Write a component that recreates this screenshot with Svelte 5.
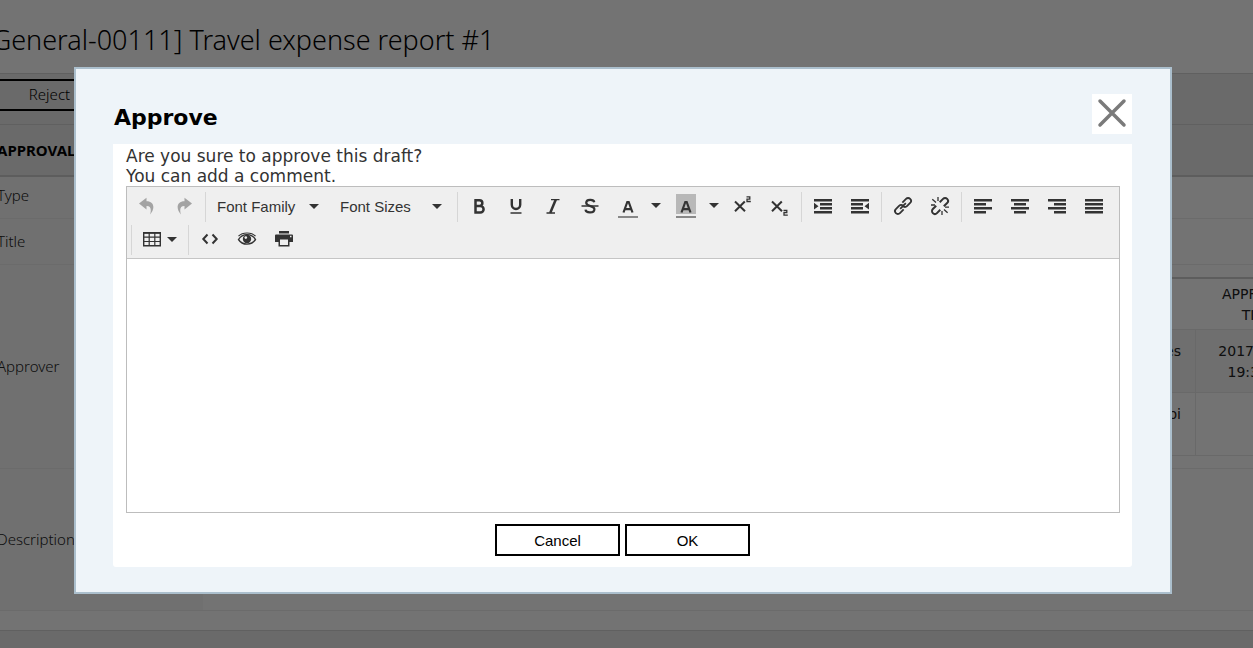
<script>
  let comment = $state('');
  const full = [3, 7, 11, 15];
  const aligns = [
    { name: 'Align left', x: 1, w: 12 },
    { name: 'Align center', x: 4, w: 12 },
    { name: 'Align right', x: 7, w: 12 },
    { name: 'Justify', x: 1, w: 18 }
  ];
</script>

{#snippet caret()}
  <svg class="caret" viewBox="0 0 10 5" aria-hidden="true"><path d="M0 0h10L5 5z" /></svg>
{/snippet}

<div class="page">
  <h1>[General-00111] Travel expense report #1</h1>
  <div class="actions"><button class="btn reject">Reject</button></div>
  <h2>APPROVAL</h2>
  <table class="details">
    <tbody>
      <tr class="r1"><th>Type</th><td></td></tr>
      <tr class="r2"><th>Title</th><td></td></tr>
      <tr class="r3">
        <th>Approver</th>
        <td>
          <table class="steps">
            <thead><tr><th></th><th class="time">APPROVAL<br />TIME</th></tr></thead>
            <tbody>
              <tr class="done"><td class="who">es</td><td class="time">2017-04-05<br />19:30:00</td></tr>
              <tr><td class="who">bi</td><td class="time"></td></tr>
            </tbody>
          </table>
        </td>
      </tr>
      <tr class="r4"><th>Description</th><td></td></tr>
    </tbody>
  </table>
  <footer></footer>
</div>

<div class="overlay">
  <div class="dialog" role="dialog" aria-modal="true" aria-labelledby="dialog-title">
    <header>
      <h3 id="dialog-title">Approve</h3>
      <button class="close" aria-label="Close">
        <svg viewBox="0 0 40 40"><path d="M8 7 32 31M32 7 8 31" /></svg>
      </button>
    </header>
    <div class="body">
      <p>Are you sure to approve this draft?<br />You can add a comment.</p>
      <div class="editor">
        <div class="toolbar" role="toolbar" aria-label="Formatting">
          <div class="row">
            <div class="group">
              <button class="tool off" aria-label="Undo">
                <svg viewBox="0 0 20 20"><path d="M9.5 1.8 2 7.6l7.500 5.800V10c3.800-.2 5.300 2.600 3.600 8.400C18.400 12.500 17.300 5.200 9.500 5.200z" /></svg>
              </button>
              <button class="tool off" aria-label="Redo">
                <svg viewBox="0 0 20 20"><path d="M10.500 1.800 18 7.600l-7.500 5.800V10c-3.800-.2-5.300 2.600-3.600 8.400C1.600 12.500 2.700 5.200 10.500 5.200z" /></svg>
              </button>
            </div>
            <div class="group">
              <div class="list"><select aria-label="Font Family"><option>Font Family</option></select>{@render caret()}</div>
              <div class="list"><select aria-label="Font Sizes"><option>Font Sizes</option></select>{@render caret()}</div>
            </div>
            <div class="group">
              <button class="tool" aria-label="Bold">
                <svg class="line" viewBox="0 0 20 20"><path d="M6.500 4.200V16.500M5.300 4.200H10.500a2.800 2.800 0 0 1 0 5.700H6.500M10.500 9.900h.8a3.300 3.300 0 0 1 0 6.600H5.300" stroke-width="2.500" /></svg>
              </button>
              <button class="tool" aria-label="Underline">
                <svg class="line" viewBox="0 0 20 20"><path d="M5.800 3V8.800a4.200 4.200 0 0 0 8.400 0V3" stroke-width="2.400" /><path d="M4.500 17H15.500" stroke-width="1.500" /></svg>
              </button>
              <button class="tool" aria-label="Italic">
                <svg class="line" viewBox="0 0 20 20"><path d="M8 3.600h8.500M3.500 17h8.500" stroke-width="1.300" /><path d="M12.800 3.600 7.200 17" stroke-width="2.500" /></svg>
              </button>
              <button class="tool" aria-label="Strikethrough">
                <svg class="line" viewBox="0 0 20 20"><path d="M14.300 6.200C13.700 2.900 6.200 2.900 6.200 6.800c0 4.200 8.200 2.500 8.200 6.400 0 4.200-8.400 4.300-8.900.5" stroke-width="2.200" /><path d="M1.500 10H18.500" stroke-width="1.500" /></svg>
              </button>
              <div class="split">
                <button class="color" aria-label="Text color">
                  <svg class="line" viewBox="0 0 20 20"><path d="M5.500 17.500 9.300 7h1.400l3.800 10.500M7 14.200h6" stroke-width="2.200" /></svg>
                </button>
                <button class="more" aria-label="Text color options">{@render caret()}</button>
              </div>
              <div class="split">
                <button class="color fill" aria-label="Background color">
                  <svg class="line" viewBox="0 0 20 20"><path d="M5.500 17.500 9.300 7h1.400l3.800 10.500M7 14.200h6" stroke-width="2.200" /></svg>
                </button>
                <button class="more" aria-label="Background color options">{@render caret()}</button>
              </div>
              <button class="tool" aria-label="Superscript">
                <svg class="line" viewBox="0 0 20 20"><path d="M2 5.500 12 15.300M11.800 5.500 2 15.300" stroke-width="2" /><path d="M13.500 .8h3.300v2.300H14V5.500H17.800" stroke-width="1.300" /></svg>
              </button>
              <button class="tool" aria-label="Subscript">
                <svg class="line" viewBox="0 0 20 20"><path d="M2 5.500 12 15.300M11.800 5.500 2 15.300" stroke-width="2" /><path d="M13.500 14.500h3.300v2.200H14V19.200H17.800" stroke-width="1.300" /></svg>
              </button>
            </div>
            <div class="group">
              <button class="tool" aria-label="Increase indent">
                <svg viewBox="0 0 20 20"><path d="M1 3h18v2.500H1zM7 7h12v2.500H7zM7 11h12v2.500H7zM1 15h18v2.500H1zM1 6.800v6.800L5.500 10.200z" /></svg>
              </button>
              <button class="tool" aria-label="Decrease indent">
                <svg viewBox="0 0 20 20"><path d="M1 3h18v2.500H1zM1 7h12v2.500H1zM1 11h12v2.500H1zM1 15h18v2.500H1zM19 6.800v6.800L14.500 10.200z" /></svg>
              </button>
            </div>
            <div class="group">
              <button class="tool" aria-label="Insert link">
                <svg class="line" viewBox="0 0 20 20"><g transform="rotate(-45 10 10)" stroke-width="1.800"><path d="M8 12.900H2.800A2.900 2.900 0 0 1 2.800 7.100H7.300A2.900 2.900 0 0 1 10.200 10M12 7.100h5.200a2.900 2.900 0 0 1 0 5.800H12.700A2.900 2.900 0 0 1 9.800 10M6 10h8" /></g></svg>
              </button>
              <button class="tool" aria-label="Remove link">
                <svg class="line" viewBox="0 0 20 20"><g transform="rotate(-45 10 10)" stroke-width="2"><path d="M7.500 12.900H2.800A2.900 2.900 0 0 1 2.800 7.100H7.500M12.500 7.100h4.700a2.900 2.900 0 0 1 0 5.800H12.500" /></g><path d="M8 1V5M2.300 3.300 6 6.600M1 9H5M12 15V19M14 13.500l3.600 3.300M15 11.200h4" stroke-width="1.300" /></svg>
              </button>
            </div>
            <div class="group">
              {#each aligns as a}
                <button class="tool" aria-label={a.name}>
                  <svg viewBox="0 0 20 20">
                    {#each full as y, i}
                      <rect x={i % 2 ? a.x : 1} {y} width={i % 2 ? a.w : 18} height="2.500" />
                    {/each}
                  </svg>
                </button>
              {/each}
            </div>
          </div>
          <div class="row second">
            <div class="group">
              <button class="tool table" aria-label="Table">
                <svg class="line" viewBox="0 0 20 20"><path d="M1.700 3.700H18.300V16.800H1.700z" stroke-width="1.400" /><path d="M1.700 4.200H18.300M1.700 8.200H18.300M1.700 12.500H18.300M7.200 4V17M12.800 4V17" stroke-width="1.200" /></svg>
                {@render caret()}
              </button>
            </div>
            <div class="group">
              <button class="tool" aria-label="Source code">
                <svg class="line" viewBox="0 0 20 20"><path d="M7.500 5.500 3.300 10l4.200 4.500M12.500 5.500 16.700 10l-4.200 4.500" stroke-width="2" /></svg>
              </button>
              <button class="tool" aria-label="Preview">
                <svg class="line" viewBox="0 0 20 20"><path d="M1.500 10.500C5.500 4 14.500 4 18.500 10.500 14.500 16.700 5.500 16.700 1.500 10.500z" stroke-width="1.400" /><path d="M1.500 7.200C5.500 2.900 14.500 2.900 18.500 7.200" stroke-width="1.200" /><circle cx="10" cy="10" r="4.200" fill="#333" stroke="none" /><circle cx="8.800" cy="8.600" r="1.300" fill="#efefef" stroke="none" /></svg>
              </button>
              <button class="tool" aria-label="Print">
                <svg viewBox="0 0 20 20"><path d="M5 2h10v2.500H5z" /><path fill-rule="evenodd" d="M2 5.500h16a1 1 0 0 1 1 1V13h-3.500v4.500h-11V13H1V6.500a1 1 0 0 1 1-1zM6 10.500V16h8v-5.500zM16 6.800v1.500h1.500V6.800z" /></svg>
              </button>
            </div>
          </div>
        </div>
        <textarea aria-label="Comment" bind:value={comment}></textarea>
      </div>
      <div class="buttons">
        <button class="btn">Cancel</button>
        <button class="btn">OK</button>
      </div>
    </div>
  </div>
</div>

<style>
  :global(body) {
    margin: 0;
    overflow: hidden;
    background: #fff;
  }
  h1, h2, h3, p { margin: 0; }
  button, select, textarea {
    font: inherit;
    color: inherit;
    border: 0;
    padding: 0;
    margin: 0;
    background: none;
    box-sizing: border-box;
  }
  .page {
    display: flex;
    flex-direction: column;
    min-height: 100vh;
    margin: 0 -69px 0 -15px;
    font: 15px/21px 'Noto Sans', sans-serif;
    color: #222;
  }
  h1 {
    margin-left: -2px;
    padding: 20px 0 13px;
    font: 300 27px/40px 'Noto Sans', sans-serif;
    color: #000;
    white-space: nowrap;
  }
  .actions {
    padding: 5px 0 13px 2px;
    background: #ebebeb;
    border-top: 1px solid #d5d5d5;
  }
  .btn {
    width: 125px;
    height: 32px;
    border: 2px solid #000;
    font: 15px/21px 'Liberation Sans', sans-serif;
    color: #000;
  }
  .reject {
    display: block;
    padding-bottom: 2px;
    font-family: 'Noto Sans', sans-serif;
    font-weight: 300;
  }
  h2 {
    padding: 15px 12px 14px;
    background: #ebebeb;
    border-top: 1px solid #d5d5d5;
    border-bottom: 2px solid #cfcfcf;
    font: 700 15px/21px 'Noto Sans', sans-serif;
    color: #000;
  }
  table {
    width: 100%;
    border-spacing: 0;
    table-layout: fixed;
  }
  th, td { padding: 0; box-sizing: border-box; }
  .details > tbody > tr > th {
    width: 218px;
    padding: 0 12px;
    background: #f8f8f8;
    text-align: left;
    font-weight: 300;
  }
  .details > tbody > tr > * { border-bottom: 1px solid #ededed; }
  .details > tbody > .r1 > th { padding-bottom: 4px; }
  .r1 { height: 42px; }
  .r2 { height: 46px; }
  .r3 { height: 204px; }
  .r4 { height: 142px; }
  .r3 > td { padding: 12px 0; vertical-align: top; }
  .steps {
    border-top: 2px solid #cfcfcf;
    font: 14px/21px 'DejaVu Sans', sans-serif;
    color: #222;
  }
  .steps th, .steps td { padding-top: 2px; border-bottom: 1px solid #e9e9e9; font-weight: 400; }
  .steps th { height: 51px; }
  .steps td { height: 63px; }
  .steps .time { width: 127px; text-align: center; }
  .steps td.time { border-left: 1px solid #e9e9e9; }
  .steps .who { padding: 11px 14px 0 0; text-align: right; vertical-align: top; }
  .done { background: #f5f5f5; }
  footer {
    flex: 1;
    margin-top: 19px;
    background: #ebebeb;
    border-top: 1px solid #d5d5d5;
  }

  .overlay {
    position: fixed;
    inset: 0;
    padding: 67px 81px 54px 74px;
    background: rgba(0, 0, 0, 0.55);
    font: 15px/21px 'Liberation Sans', sans-serif;
    color: #333;
  }
  .dialog {
    padding: 25px 38px 25px 37px;
    background: #eef4f9;
    border: 2px solid #abbfcd;
  }
  header {
    display: flex;
    justify-content: space-between;
    padding-bottom: 10px;
  }
  h3 {
    padding: 8px 0 0 1px;
    font: 700 22px/32px 'DejaVu Sans', sans-serif;
    color: #000;
  }
  .close { width: 40px; height: 40px; background: #fff; }
  .close svg {
    display: block;
    fill: none;
    stroke: #7a7a7a;
    stroke-width: 3.5;
    stroke-linecap: round;
  }
  .body {
    padding: 0 12px 11px 13px;
    background: #fff;
    border-radius: 0 0 3px 3px;
  }
  p {
    height: 40px;
    padding-top: 2px;
    font: 17px/20px 'DejaVu Sans', sans-serif;
  }
  .editor { border: 1px solid #bdbdbd; }
  .toolbar {
    display: grid;
    gap: 3px;
    padding: 5px 0 3px;
    background: #efefef;
    border-bottom: 1px solid #c5c5c5;
  }
  .row { display: flex; flex-wrap: wrap; row-gap: 3px; }
  .second { padding-left: 4px; }
  .group {
    display: flex;
    height: 30px;
    padding: 0 3px 0 2px;
    border-left: 1px solid #d6d6d6;
  }
  .row:first-child .group:first-child { padding-left: 1px; border-left: 0; }
  .tool {
    display: flex;
    align-items: center;
    justify-content: center;
    width: 37px;
    height: 28px;
  }
  .tool > svg:not(.caret), .color svg {
    flex: none;
    width: 20px;
    height: 20px;
    fill: #333;
  }
  .tool > svg.line:not(.caret), .color svg.line { fill: none; stroke: #333; }
  .off { opacity: 0.4; }
  .table { width: 51px; gap: 5px; }
  .caret { flex: none; display: block; width: 10px; height: 5px; fill: #333; }
  .list { position: relative; width: 123px; }
  .list select {
    width: 100%;
    height: 29px;
    padding: 0 9px;
    appearance: none;
  }
  .list .caret {
    position: absolute;
    right: 12px;
    top: 12px;
    pointer-events: none;
  }
  .split { display: flex; padding-left: 10px; }
  .color {
    width: 20px;
    height: 24px;
    margin-top: 2px;
    border-bottom: 2px solid #888;
  }
  .color svg { display: block; height: 20px; margin-top: -1px; }
  .fill { background: linear-gradient(#b8b8b8 20px, transparent 20px); }
  .more { display: grid; place-items: center; width: 28px; height: 27px; padding: 0 5px 0 13px; }
  textarea {
    display: block;
    width: 100%;
    height: 253px;
    padding: 8px;
    resize: none;
    background: #fff;
    outline: 0;
  }
  .buttons {
    display: flex;
    justify-content: center;
    gap: 5px;
    padding: 11px 1px 0 0;
  }
</style>
